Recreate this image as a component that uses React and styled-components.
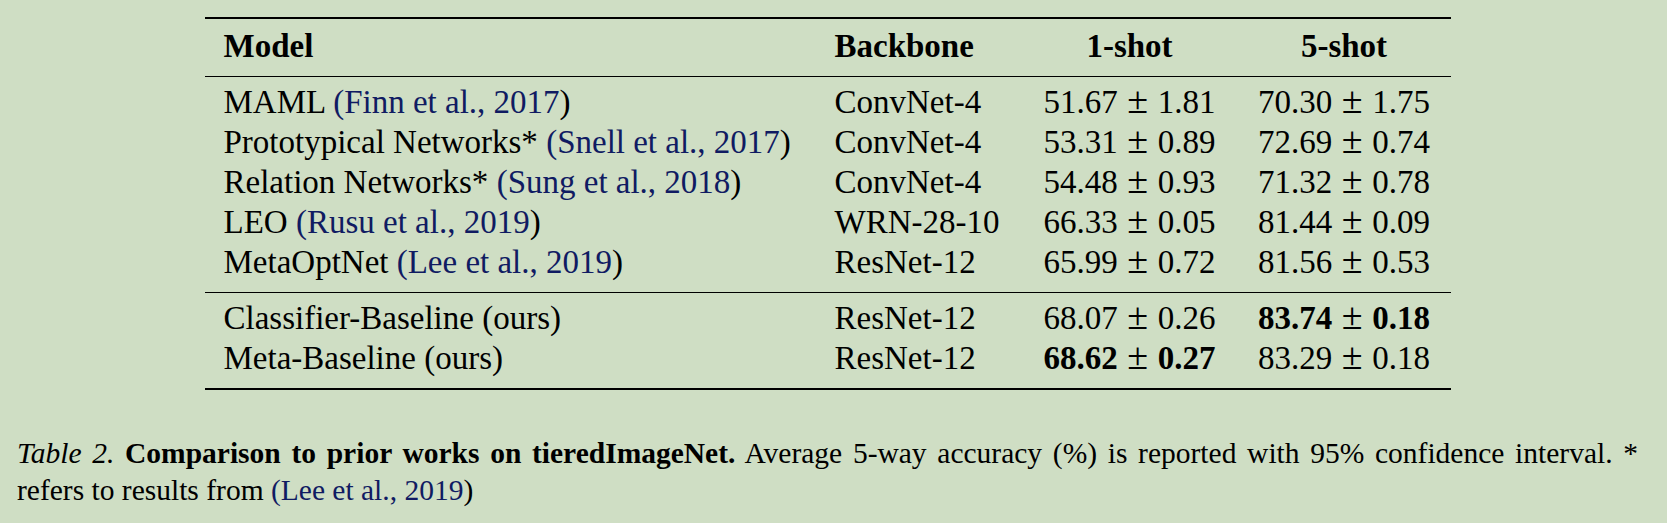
import React from 'react';
import styled, { createGlobalStyle } from 'styled-components';

const GlobalStyle = createGlobalStyle`
  html, body {
    margin: 0;
    padding: 0;
    background: #cfdec4;
  }
  body {
    font-family: 'Liberation Serif', 'Times New Roman', serif;
    color: #000;
  }
`;

const Page = styled.div`
  width: 1667px;
  height: 523px;
  padding: 17px 0 0 17px;
  box-sizing: border-box;
  background: #cfdec4;
  overflow: hidden;
`;

const Figure = styled.div`
  width: 1621px;
  display: flex;
  flex-direction: column;
`;

const Table = styled.div`
  width: 1246px;
  margin: 0 auto;
  font-size: 33px;
  line-height: 40px;
`;

const Group = styled.div`
  border-top: ${(p) => (p.$top ? `${p.$top}px solid #000` : 'none')};
  border-bottom: ${(p) => p.$bottom}px solid #000;
  padding: ${(p) => p.$padTop}px 0 10px;
`;

const Row = styled.div`
  display: grid;
  grid-template-columns: 611px 206px 216px 213px;
  height: 40px;
  white-space: nowrap;
`;

const Cell = styled.div`
  padding: 0 19px;
  text-align: ${(p) => p.$align || 'left'};
  font-weight: ${(p) => (p.$head ? 700 : 400)};
`;

const Cite = styled.span`
  color: #101b62;
`;

const Pm = styled.span`
  font-weight: 400;
  font-size: 1.15em;
  line-height: 0;
  margin: 0 0.25em;
`;

const Caption = styled.div`
  margin-top: 45px;
  font-size: 29.5px;
  line-height: 37px;
`;

const CaptionLine = styled.div`
  text-align: ${(p) => (p.$justify ? 'justify' : 'left')};
  text-align-last: ${(p) => (p.$justify ? 'justify' : 'left')};
  white-space: ${(p) => (p.$justify ? 'normal' : 'nowrap')};
`;

const Label = styled.span`
  font-style: italic;
`;

const Title = styled.span`
  font-weight: 700;
`;

const priorRows = [
  { model: 'MAML', cite: 'Finn et al., 2017', backbone: 'ConvNet-4', one: ['51.67', '1.81'], five: ['70.30', '1.75'] },
  { model: 'Prototypical Networks*', cite: 'Snell et al., 2017', backbone: 'ConvNet-4', one: ['53.31', '0.89'], five: ['72.69', '0.74'] },
  { model: 'Relation Networks*', cite: 'Sung et al., 2018', backbone: 'ConvNet-4', one: ['54.48', '0.93'], five: ['71.32', '0.78'] },
  { model: 'LEO', cite: 'Rusu et al., 2019', backbone: 'WRN-28-10', one: ['66.33', '0.05'], five: ['81.44', '0.09'] },
  { model: 'MetaOptNet', cite: 'Lee et al., 2019', backbone: 'ResNet-12', one: ['65.99', '0.72'], five: ['81.56', '0.53'] },
];

const ourRows = [
  { model: 'Classifier-Baseline (ours)', backbone: 'ResNet-12', one: ['68.07', '0.26'], five: ['83.74', '0.18'], bestFive: true },
  { model: 'Meta-Baseline (ours)', backbone: 'ResNet-12', one: ['68.62', '0.27'], five: ['83.29', '0.18'], bestOne: true },
];

function Score({ value, best }) {
  const [mean, ci] = value;
  return best ? (
    <>
      <b>{mean}</b>
      <Pm>±</Pm>
      <b>{ci}</b>
    </>
  ) : (
    <>
      {mean}
      <Pm>±</Pm>
      {ci}
    </>
  );
}

function ResultRow({ row }) {
  return (
    <Row>
      <Cell>
        {row.model}
        {row.cite && (
          <>
            {' '}
            <Cite>({row.cite}</Cite>)
          </>
        )}
      </Cell>
      <Cell>{row.backbone}</Cell>
      <Cell $align="center">
        <Score value={row.one} best={row.bestOne} />
      </Cell>
      <Cell $align="center">
        <Score value={row.five} best={row.bestFive} />
      </Cell>
    </Row>
  );
}

export default function App() {
  return (
    <>
      <GlobalStyle />
      <Page>
        <Figure>
          <Table>
            <Group $top={2} $bottom={1} $padTop={7}>
              <Row>
                <Cell $head>Model</Cell>
                <Cell $head>Backbone</Cell>
                <Cell $head $align="center">1-shot</Cell>
                <Cell $head $align="center">5-shot</Cell>
              </Row>
            </Group>
            <Group $bottom={1} $padTop={5}>
              {priorRows.map((row) => (
                <ResultRow key={row.model} row={row} />
              ))}
            </Group>
            <Group $bottom={2} $padTop={5}>
              {ourRows.map((row) => (
                <ResultRow key={row.model} row={row} />
              ))}
            </Group>
          </Table>
          <Caption>
            <CaptionLine $justify>
              <Label>Table 2.</Label> <Title>Comparison to prior works on tieredImageNet.</Title>
              {'  '}Average 5-way accuracy (%) is reported with 95% confidence interval.{'  '}*
            </CaptionLine>
            <CaptionLine>
              refers to results from <Cite>(Lee et al., 2019</Cite>)
            </CaptionLine>
          </Caption>
        </Figure>
      </Page>
    </>
  );
}
